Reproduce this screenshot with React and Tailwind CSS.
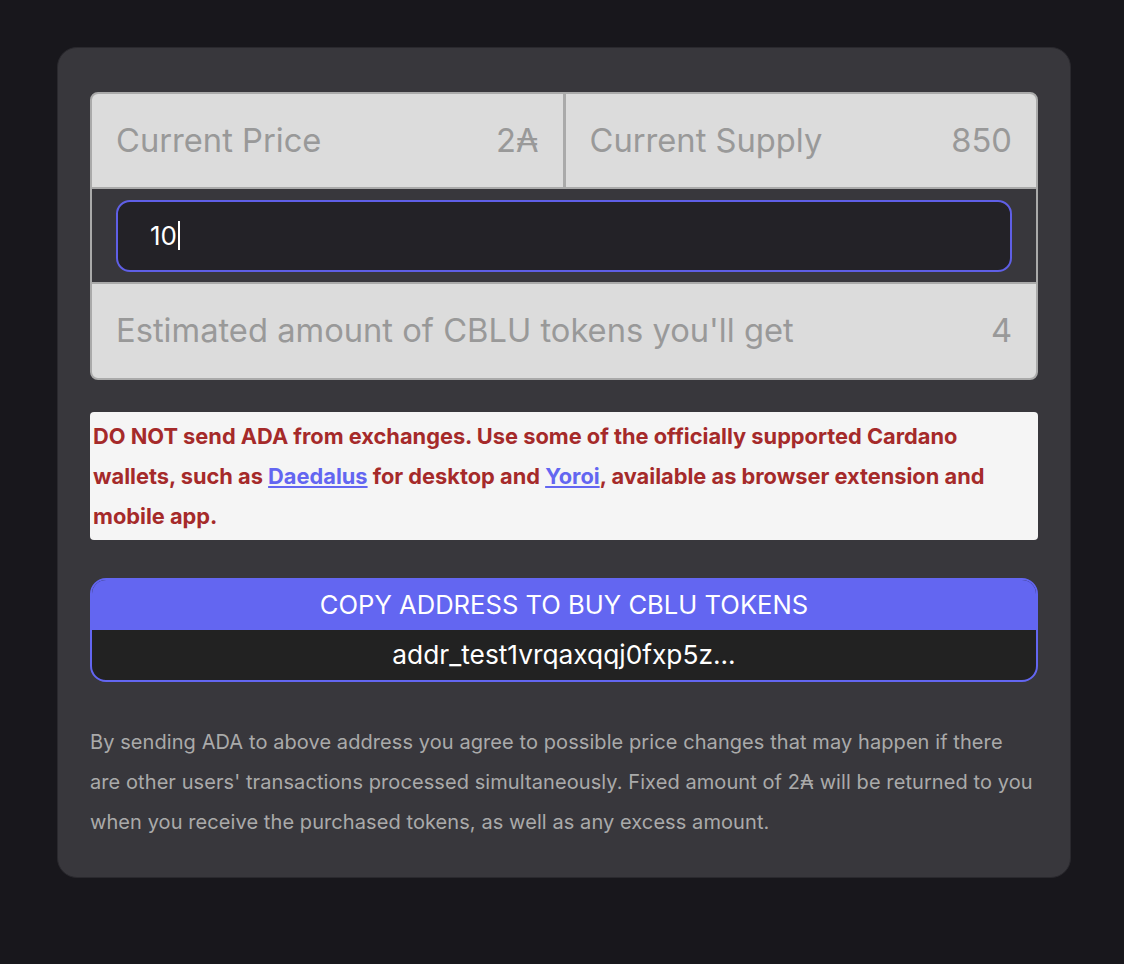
import React from "react";

const Ada = () => <span>₳</span>;

const App = () => {
  return (
    <div
      className="min-h-screen w-full bg-[#18171c] pt-[47px] px-[57px]"
      style={{ fontFamily: "Inter, 'Noto Sans', sans-serif" }}
    >
      <div className="w-[1014px] rounded-[20px] border border-[#2a292e] bg-[#38373c] px-8 pt-11 pb-[35px]">
        {/* stats table */}
        <div className="overflow-hidden rounded-lg border-2 border-[#aaaaaa] bg-[#dcdcdc] text-[32.7px] text-[#999999]">
          <div className="flex h-[95px] border-b-2 border-[#aaaaaa]">
            <div className="flex flex-1 items-center justify-between border-r-[3px] border-[#aaaaaa] px-6">
              <span>Current Price</span>
              <span>
                2<Ada />
              </span>
            </div>
            <div className="flex flex-1 items-center justify-between px-6">
              <span>Current Supply</span>
              <span>850</span>
            </div>
          </div>
          <div className="flex h-[95px] items-center border-b-2 border-[#aaaaaa] bg-[#38373c] px-6">
            <div className="flex h-[72px] w-full items-center rounded-[14px] border-2 border-[#5f5fe6] bg-[#232227] pl-8 text-[26px] text-white">
              <span>10</span>
              <span className="ml-px inline-block h-[29px] w-[2px] bg-white" />
            </div>
          </div>
          <div className="flex h-[94px] items-center justify-between px-6">
            <span>Estimated amount of CBLU tokens you'll get</span>
            <span>4</span>
          </div>
        </div>

        {/* warning */}
        <div className="mt-8 rounded bg-[#f5f5f5] px-[3px] py-1 text-[21.8px] font-bold leading-10 text-[#a52a2a]">
          DO NOT send ADA from exchanges. Use some of the officially supported Cardano wallets, such as{" "}
          <a href="#" className="text-[#6366f1] underline">
            Daedalus
          </a>{" "}
          for desktop and{" "}
          <a href="#" className="text-[#6366f1] underline">
            Yoroi
          </a>
          , available as browser extension and mobile app.
        </div>

        {/* copy address button */}
        <button className="mt-[38px] w-full overflow-hidden rounded-2xl border-2 border-[#6366f1] bg-[#222222] text-white">
          <div className="flex h-[50px] items-center justify-center bg-[#6366f1] text-[25.6px]">
            COPY ADDRESS TO BUY CBLU TOKENS
          </div>
          <div className="flex h-[50px] items-center justify-center text-[26.3px]">
            addr_test1vrqaxqqj0fxp5z...
          </div>
        </button>

        {/* footer note */}
        <p className="mt-10 text-[20px] leading-10 tracking-[0.08px] text-[#aaaaaa]">
          By sending ADA to above address you agree to possible price changes that may happen if there are other users'
          transactions processed simultaneously. Fixed amount of 2<Ada /> will be returned to you when you receive the
          purchased tokens, as well as any excess amount.
        </p>
      </div>
    </div>
  );
};

export default App;
